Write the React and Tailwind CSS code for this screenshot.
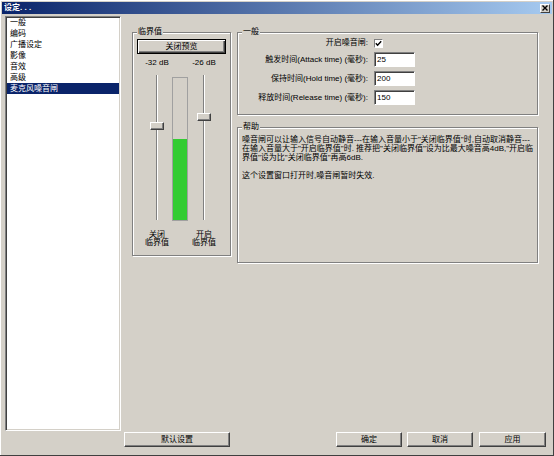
import React from "react";

function Group({ label, className, children }) {
  return (
    <div
      className={
        "relative border border-[#808080] shadow-[inset_1px_1px_0_#ffffff,1px_1px_0_#ffffff] " +
        className
      }
    >
      <span className="absolute left-[4px] top-[-6px] bg-[#d4d0c8] px-[1px] text-[8px] leading-[10px] whitespace-nowrap">
        {label}
      </span>
      {children}
    </div>
  );
}

function Btn({ className, children }) {
  return (
    <div
      className={
        "h-[15px] bg-[#d4d0c8] border border-t-white border-l-white border-r-[#404040] border-b-[#404040] shadow-[inset_-1px_-1px_0_#808080] text-[8px] leading-none flex items-center justify-center " +
        className
      }
    >
      {children}
    </div>
  );
}

function Field({ value }) {
  return (
    <div className="w-[41px] h-[15px] bg-white border border-t-[#808080] border-l-[#808080] border-r-white border-b-white shadow-[inset_1px_1px_0_#404040] text-[8px] leading-[13px] pl-[2px]">
      {value}
    </div>
  );
}

function Slider({ top }) {
  return (
    <div className="relative h-[146px] w-full">
      <div className="absolute left-1/2 -translate-x-1/2 top-0 bottom-[1px] w-[2px] border-l border-l-[#808080] border-r border-r-white" />
      <div
        className={
          "absolute left-1/2 -translate-x-1/2 w-[14px] h-[8px] bg-[#d4d0c8] border border-t-white border-l-white border-r-[#404040] border-b-[#404040] shadow-[inset_-1px_-1px_0_#808080] " +
          top
        }
      />
    </div>
  );
}

export default function App() {
  const items = ["一般", "编码", "广播设定", "影像", "音效", "高级", "麦克风噪音闸"];
  return (
    <div className="w-[554px] h-[456px] bg-[#d4d0c8] flex flex-col overflow-hidden text-black font-['Liberation_Sans','Noto_Sans_CJK_SC',sans-serif] shadow-[inset_-1px_-1px_0_#404040,inset_1px_1px_0_#ffffff]">
      {/* title bar */}
      <div className="mx-[2px] mt-[2px] h-[12px] bg-[linear-gradient(to_right,#0a246a,#a6caf0)] flex items-center justify-between pl-[2px] pr-[2px]">
        <span className="text-white text-[8px] leading-none font-bold">设定. . .</span>
        <div className="w-[10px] h-[9px] bg-[#d4d0c8] border border-t-white border-l-white border-r-[#404040] border-b-[#404040] flex items-center justify-center">
          <svg width="6" height="6" viewBox="0 0 6 6">
            <path d="M0.5 0.5 L5.5 5.5 M5.5 0.5 L0.5 5.5" stroke="#000" strokeWidth="1.4" />
          </svg>
        </div>
      </div>

      {/* body */}
      <div className="flex flex-1 min-h-0">
        {/* left list */}
        <div className="ml-[5px] mt-[2px] w-[116px] h-[415px] bg-white border border-t-[#808080] border-l-[#808080] border-b-white border-r-white shadow-[inset_1px_1px_0_#404040,inset_-1px_-1px_0_#d4d0c8] px-[1px]">
          {items.map((t, i) => (
            <div
              key={t}
              className={
                i === items.length - 1
                  ? "h-[11px] leading-[11px] text-[8px] pl-[3px] bg-[#0a246a] text-white"
                  : "h-[11px] leading-[11px] text-[8px] pl-[3px]"
              }
            >
              {t}
            </div>
          ))}
        </div>

        {/* right column */}
        <div className="ml-[3px] w-[422px] flex flex-col">
          <div className="mt-[18px] ml-[8px] flex items-start">
            {/* 临界值 */}
            <Group label="临界值" className="w-[99px] h-[224px]">
              <div className="ml-[4px] mt-[6px] w-[89px] h-[15px] border border-black bg-[#d4d0c8] shadow-[inset_1px_1px_0_#ffffff,inset_-1px_-1px_0_#404040,inset_-2px_-2px_0_#808080] text-[8px] leading-none flex items-center justify-center">
                关闭预览
              </div>
              <div className="ml-[9px] mt-[4px] flex text-[8px] leading-[9px] h-[9px]">
                <div className="w-[30px] text-center whitespace-nowrap">-32 dB</div>
                <div className="w-[16px]" />
                <div className="w-[32px] text-center whitespace-nowrap">-26 dB</div>
              </div>
              <div className="ml-[9px] mt-[8px] flex">
                <div className="w-[30px]">
                  <Slider top="top-[47px]" />
                </div>
                <div className="w-[16px]">
                  <div className="mt-[2px] h-[144px] border border-[#a0a0a0] flex flex-col justify-end">
                    <div className="h-[81px] bg-[#33cc33]" />
                  </div>
                </div>
                <div className="w-[32px]">
                  <Slider top="top-[38px]" />
                </div>
              </div>
              <div className="ml-[9px] mt-[10px] flex text-[8px] leading-[8px]">
                <div className="w-[30px] text-center whitespace-nowrap">
                  关闭
                  <br />
                  临界值
                </div>
                <div className="w-[16px]" />
                <div className="w-[32px] text-center whitespace-nowrap">
                  开启
                  <br />
                  临界值
                </div>
              </div>
            </Group>

            <div className="ml-[6px] w-[301px] flex flex-col">
              {/* 一般 */}
              <Group label="一般" className="h-[83px]">
                <div className="flex flex-col text-[8px]">
                  <div className="mt-[4px] h-[12px] flex items-center">
                    <div className="w-[130px] text-right whitespace-nowrap">开启噪音闸:</div>
                    <div className="ml-[6px] w-[9px] h-[9px] bg-white border border-t-[#808080] border-l-[#808080] border-r-white border-b-white flex items-center justify-center">
                      <svg width="7" height="7" viewBox="0 0 7 7">
                        <path d="M0.8 3.2 L2.6 5.2 L6.2 1.2" stroke="#000" strokeWidth="1.4" fill="none" />
                      </svg>
                    </div>
                  </div>
                  <div className="mt-[3px] h-[15px] flex items-center">
                    <div className="w-[130px] text-right whitespace-nowrap">触发时间(Attack time) (毫秒):</div>
                    <div className="ml-[6px]">
                      <Field value="25" />
                    </div>
                  </div>
                  <div className="mt-[4px] h-[15px] flex items-center">
                    <div className="w-[130px] text-right whitespace-nowrap">保持时间(Hold time) (毫秒):</div>
                    <div className="ml-[6px]">
                      <Field value="200" />
                    </div>
                  </div>
                  <div className="mt-[4px] h-[15px] flex items-center">
                    <div className="w-[130px] text-right whitespace-nowrap">释放时间(Release time) (毫秒):</div>
                    <div className="ml-[6px]">
                      <Field value="150" />
                    </div>
                  </div>
                </div>
              </Group>

              {/* 帮助 */}
              <Group label="帮助" className="mt-[12px] h-[136px]">
                <div className="pl-[4px] pt-[7px] text-[8px] leading-[9px] whitespace-nowrap">
                  <div>噪音闸可以让输入信号自动静音---在输入音量小于"关闭临界值"时,自动取消静音---</div>
                  <div>在输入音量大于"开启临界值"时. 推荐把"关闭临界值"设为比最大噪音高4dB,"开启临</div>
                  <div>界值"设为比"关闭临界值"再高6dB.</div>
                  <div className="h-[9px]" />
                  <div>这个设置窗口打开时,噪音闸暂时失效.</div>
                </div>
              </Group>
            </div>
          </div>

          {/* bottom buttons */}
          <div className="mt-auto mb-[9px] flex">
            <Btn className="w-[106px]">默认设置</Btn>
            <Btn className="ml-[106px] w-[66px]">确定</Btn>
            <Btn className="ml-[5px] w-[66px]">取消</Btn>
            <Btn className="ml-[6px] w-[67px]">应用</Btn>
          </div>
        </div>
      </div>
    </div>
  );
}
